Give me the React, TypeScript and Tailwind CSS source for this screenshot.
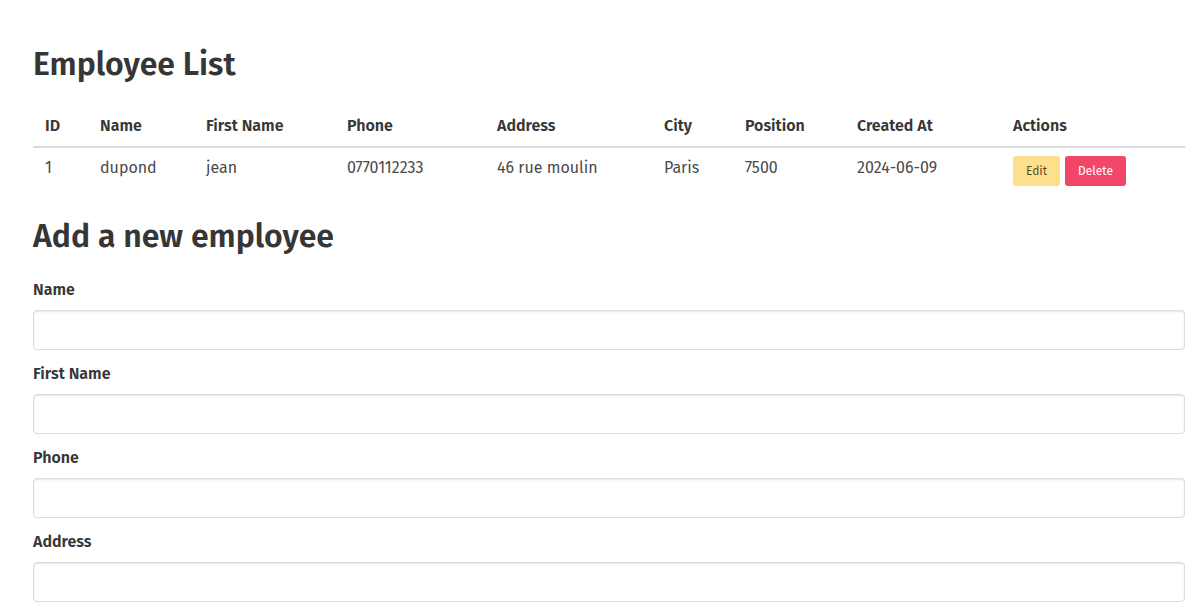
const employees = [
  { id: 1, name: "dupond", firstName: "jean", phone: "0770112233", address: "46 rue moulin", city: "Paris", position: "7500", createdAt: "2024-06-09" },
]

const columns = [
  { label: "ID", w: "w-[55px]" },
  { label: "Name", w: "w-[106px]" },
  { label: "First Name", w: "w-[141px]" },
  { label: "Phone", w: "w-[150px]" },
  { label: "Address", w: "w-[167px]" },
  { label: "City", w: "w-[81px]" },
  { label: "Position", w: "w-[112px]" },
  { label: "Created At", w: "w-[156px]" },
  { label: "Actions", w: "" },
]

const fields = ["Name", "First Name", "Phone", "Address"]

export default function App() {
  return (
    <div className="min-h-screen bg-white pl-[33px] pr-[14px] pt-[46px] font-['Fira_Sans','Roboto',sans-serif] text-base text-[#4a4a4a]">
      <h1 className="mb-6 text-[32px] font-semibold leading-[1.125] text-[#363636]">Employee List</h1>
      <table className="mb-6 w-full table-fixed border-collapse text-left">
        <thead>
          <tr>
            {columns.map((c) => (
              <th key={c.label} className={`${c.w} border-b-2 border-[#dbdbdb] px-3 py-2 font-semibold leading-6 text-[#363636]`}>
                {c.label}
              </th>
            ))}
          </tr>
        </thead>
        <tbody>
          {employees.map((e) => (
            <tr key={e.id}>
              <td className="px-3 py-2 align-top leading-6">{e.id}</td>
              <td className="px-3 py-2 align-top leading-6">{e.name}</td>
              <td className="px-3 py-2 align-top leading-6">{e.firstName}</td>
              <td className="px-3 py-2 align-top leading-6">{e.phone}</td>
              <td className="px-3 py-2 align-top leading-6">{e.address}</td>
              <td className="px-3 py-2 align-top leading-6">{e.city}</td>
              <td className="px-3 py-2 align-top leading-6">{e.position}</td>
              <td className="px-3 py-2 align-top leading-6">{e.createdAt}</td>
              <td className="px-3 py-2 align-top leading-6">
                <div className="flex gap-[5px]">
                  <button className="h-[30px] rounded-[3px] bg-[#ffe08a] px-[13px] text-xs text-black/70">Edit</button>
                  <button className="h-[30px] rounded-[3px] bg-[#f14668] px-[13px] text-xs text-white">Delete</button>
                </div>
              </td>
            </tr>
          ))}
        </tbody>
      </table>

      <h2 className="mb-6 text-[32px] font-semibold leading-[1.125] text-[#363636]">Add a new employee</h2>
      <form className="flex flex-col gap-3">
        {fields.map((f) => (
          <div key={f}>
            <label className="mb-2 block font-semibold leading-6 text-[#363636]">{f}</label>
            <input
              type="text"
              className="block h-10 w-full rounded border border-[#dbdbdb] bg-white px-[11px] text-[#363636] shadow-[inset_0_1px_2px_rgba(10,10,10,0.1)] outline-none"
            />
          </div>
        ))}
      </form>
    </div>
  )
}
